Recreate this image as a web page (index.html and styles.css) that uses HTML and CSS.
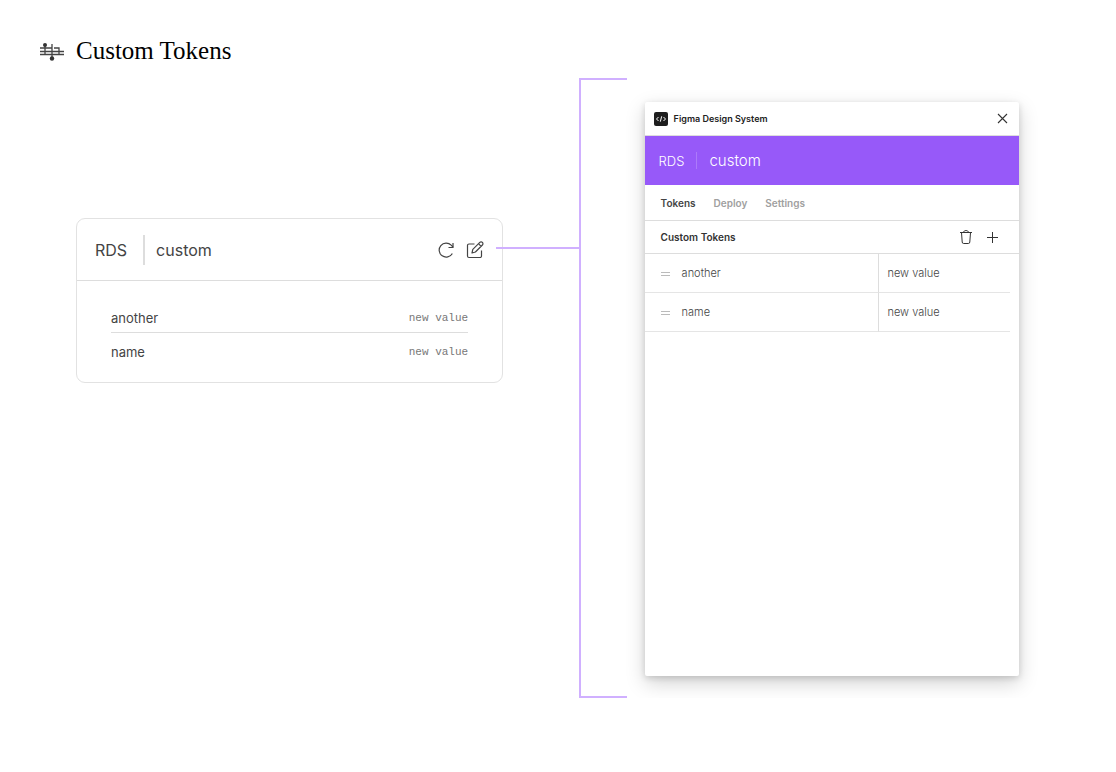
FILE: index.html
```
<!DOCTYPE html>
<html lang="en">
<head>
    <meta charset="UTF-8">
    <meta name="viewport" content="width=device-width, initial-scale=1">
    <title>Custom Tokens</title>
    <link rel="stylesheet" href="styles.css">
</head>
<body>
    <header class="page-header">
        <svg class="page-icon" width="26" height="20" viewBox="0 0 26 20" fill="none" stroke="#444" stroke-width="1.3" aria-hidden="true">
            <path d="M1 7h8M1 10.500h24M1 13.500h24M9 7h4M15 7h5v6.500M6 3v10.500M13 3v14"/>
            <circle cx="6" cy="4" r="2" fill="#333" stroke="none"/>
            <circle cx="13" cy="17.500" r="2.200" fill="#333" stroke="none"/>
        </svg>
        <h1>Custom Tokens</h1>
    </header>

    <main class="board">
        <section class="card">
            <div class="card-header">
                <span>RDS</span>
                <span class="card-divider"></span>
                <span>custom</span>
                <div class="card-actions">
                    <button type="button" aria-label="Refresh">
                        <svg width="16" height="16" viewBox="0 0 16 16" fill="none" stroke="#444" stroke-width="1.2">
                            <path d="M14.3 11.500A7 7 0 1 1 13.2 3.200L15 5"/>
                            <path d="M15 1v4.500h-4.500"/>
                        </svg>
                    </button>
                    <button type="button" aria-label="Edit">
                        <svg width="18" height="18" viewBox="0 0 18 18" fill="none" stroke="#444" stroke-width="1.2" stroke-linejoin="round">
                            <path d="M8.500 3H3a1.500 1.500 0 0 0-1.500 1.500V15A1.500 1.500 0 0 0 3 16.500h11a1.500 1.500 0 0 0 1.500-1.500V9.500"/>
                            <path d="M6 12l.8-3.600 7-7a1.600 1.600 0 0 1 2.600 2.600l-7 7zM12.500 2.700l2.600 2.600"/>
                        </svg>
                    </button>
                </div>
            </div>
            <dl class="card-list">
                <div class="card-row">
                    <dt>another</dt>
                    <dd>new value</dd>
                </div>
                <div class="card-row">
                    <dt>name</dt>
                    <dd>new value</dd>
                </div>
            </dl>
        </section>

        <div class="connector">
            <div class="connector-line"></div>
            <div class="connector-bracket"></div>
        </div>

        <section class="plugin">
            <div class="plugin-titlebar">
                <svg width="14" height="14" viewBox="0 0 14 14" fill="none" aria-hidden="true">
                    <rect width="14" height="14" rx="2" fill="#1e1e1e"/>
                    <path d="M4.500 5L2.500 7l2 2M9.500 5l2 2-2 2M7.700 4.300L6.300 9.700" stroke="#fff"/>
                </svg>
                <h2>Figma Design System</h2>
                <button type="button" aria-label="Close">
                    <svg width="11" height="11" viewBox="0 0 11 11" fill="none" stroke="#333" stroke-width="1.1">
                        <path d="M1 1l9 9M10 1l-9 9"/>
                    </svg>
                </button>
            </div>
            <div class="plugin-banner">
                <span class="banner-group">RDS</span>
                <span class="banner-divider"></span>
                <span class="banner-name">custom</span>
            </div>
            <nav class="plugin-tabs">
                <a class="active" href="#tokens">Tokens</a>
                <a href="#deploy">Deploy</a>
                <a href="#settings">Settings</a>
            </nav>
            <div class="plugin-toolbar" id="tokens">
                <h3>Custom Tokens</h3>
                <button type="button" aria-label="Delete">
                    <svg width="12" height="14" viewBox="0 0 12 14" fill="none" stroke="#333">
                        <path d="M0 2.500h12M3.500 2.500c0-2.600 5-2.600 5 0M1.500 2.500l.7 9.500a1.500 1.500 0 0 0 1.500 1.500h4.600a1.500 1.500 0 0 0 1.500-1.500l.7-9.500"/>
                    </svg>
                </button>
                <button type="button" aria-label="Add">
                    <svg width="11" height="11" viewBox="0 0 11 11" stroke="#333">
                        <path d="M0 5.500h11M5.500 0v11"/>
                    </svg>
                </button>
            </div>
            <table class="token-table">
                <tr>
                    <td class="token-name"><span class="drag"></span>another</td>
                    <td class="token-value">new value</td>
                </tr>
                <tr>
                    <td class="token-name"><span class="drag"></span>name</td>
                    <td class="token-value">new value</td>
                </tr>
            </table>
        </section>
    </main>
</body>
</html>
```
FILE: styles.css
```
* {
    box-sizing: border-box;
}

body {
    font-family: Inter, sans-serif;
    background: #fff;
    color: #444;
    margin: 0;
}

h1, h2, h3, dl, dd {
    margin: 0;
}

button {
    display: flex;
    padding: 0;
    border: none;
    background: none;
    cursor: pointer;
}

.page-header {
    display: flex;
    align-items: center;
    gap: 11px;
    height: 78px;
    padding: 24px 39px 0;
}

.page-header h1 {
    font-family: "Liberation Serif", serif;
    font-size: 25px;
    font-weight: 400;
    color: #000;
}

.board {
    display: flex;
    align-items: stretch;
    min-height: calc(100vh - 152px);
    padding: 0 97px 0 76px;
}

/* Token card */

.card {
    flex: 427;
    align-self: flex-start;
    min-width: 0;
    margin-top: 140px;
    border: 1px solid #e2e2e2;
    border-radius: 9px;
}

.card-header {
    display: flex;
    align-items: center;
    gap: 11px;
    height: 62px;
    padding: 0 18px;
    border-bottom: 1px solid #ddd;
    font-size: 16px;
}

.card-divider {
    width: 2px;
    height: 30px;
    margin-left: 5px;
    background: #ddd;
}

.card-actions {
    display: flex;
    align-items: center;
    gap: 12px;
    margin-left: auto;
}

.card-list {
    padding: 22px 34px 15px;
}

.card-row {
    display: flex;
    align-items: center;
    justify-content: space-between;
    height: 29px;
    font-size: 13px;
}

.card-row + .card-row {
    border-top: 1px solid #ddd;
    height: 35px;
    padding-top: 4px;
}

.card-row dd {
    font-family: "Liberation Mono", monospace;
    font-size: 11px;
    color: #777;
}

/* Line joining the card to the plugin window */

.connector {
    display: flex;
    flex: 131;
    margin-left: -7px;
    margin-right: 18px;
}

.connector-line {
    flex: 84;
    height: 2px;
    margin-top: 169px;
    background: #d0b0ff;
}

.connector-bracket {
    flex: 47;
    border: 2px solid #d0b0ff;
    border-right: none;
}

/* Plugin window */

.plugin {
    flex: 376;
    margin: 24px 0 22px;
    border-radius: 2px;
    background: #fff;
    box-shadow: 0 2px 6px rgba(0, 0, 0, 0.14), 0 7px 20px rgba(0, 0, 0, 0.18);
}

.plugin-titlebar {
    display: flex;
    align-items: center;
    gap: 6px;
    height: 34px;
    padding: 0 11px 0 9px;
    border-bottom: 1px solid #ddd;
}

.plugin-titlebar h2 {
    font-size: 9px;
    font-weight: 600;
    color: #222;
}

.plugin-titlebar button {
    margin-left: auto;
}

.plugin-banner {
    display: flex;
    align-items: center;
    gap: 12px;
    height: 49px;
    padding: 0 14px;
    background: #9759f9;
    color: #fff;
}

.banner-group {
    font-size: 13px;
    font-weight: 300;
}

.banner-divider {
    width: 1px;
    height: 17px;
    background: #ac7afa;
}

.banner-name {
    font-size: 15px;
    font-weight: 300;
}

.plugin-tabs {
    display: flex;
    align-items: center;
    gap: 18px;
    height: 36px;
    padding: 0 16px;
    border-bottom: 1px solid #ddd;
    font-size: 10px;
    font-weight: 600;
}

.plugin-tabs a {
    color: #a0a0a0;
    text-decoration: none;
}

.plugin-tabs .active {
    color: #444;
}

.plugin-toolbar {
    display: flex;
    align-items: center;
    gap: 15px;
    height: 33px;
    padding: 0 21px 0 16px;
    border-bottom: 1px solid #ddd;
}

.plugin-toolbar h3 {
    margin-right: auto;
    font-size: 10px;
    font-weight: 600;
    color: #333;
}

.token-table {
    width: calc(100% - 9px);
    border-collapse: separate;
    border-spacing: 0;
    font-size: 11px;
    font-weight: 300;
}

.token-table td {
    height: 39px;
    padding: 0;
    border-bottom: 1px solid #e5e5e5;
}

.token-table .token-name {
    width: 64%;
    padding-left: 16px;
}

.token-table .token-value {
    padding-left: 8px;
    border-left: 1px solid #ddd;
}

/* Two-line drag handle */
.drag {
    display: inline-block;
    width: 9px;
    height: 4px;
    margin-right: 12px;
    border: 1px solid #bbb;
    border-width: 1px 0;
    vertical-align: middle;
}
```
